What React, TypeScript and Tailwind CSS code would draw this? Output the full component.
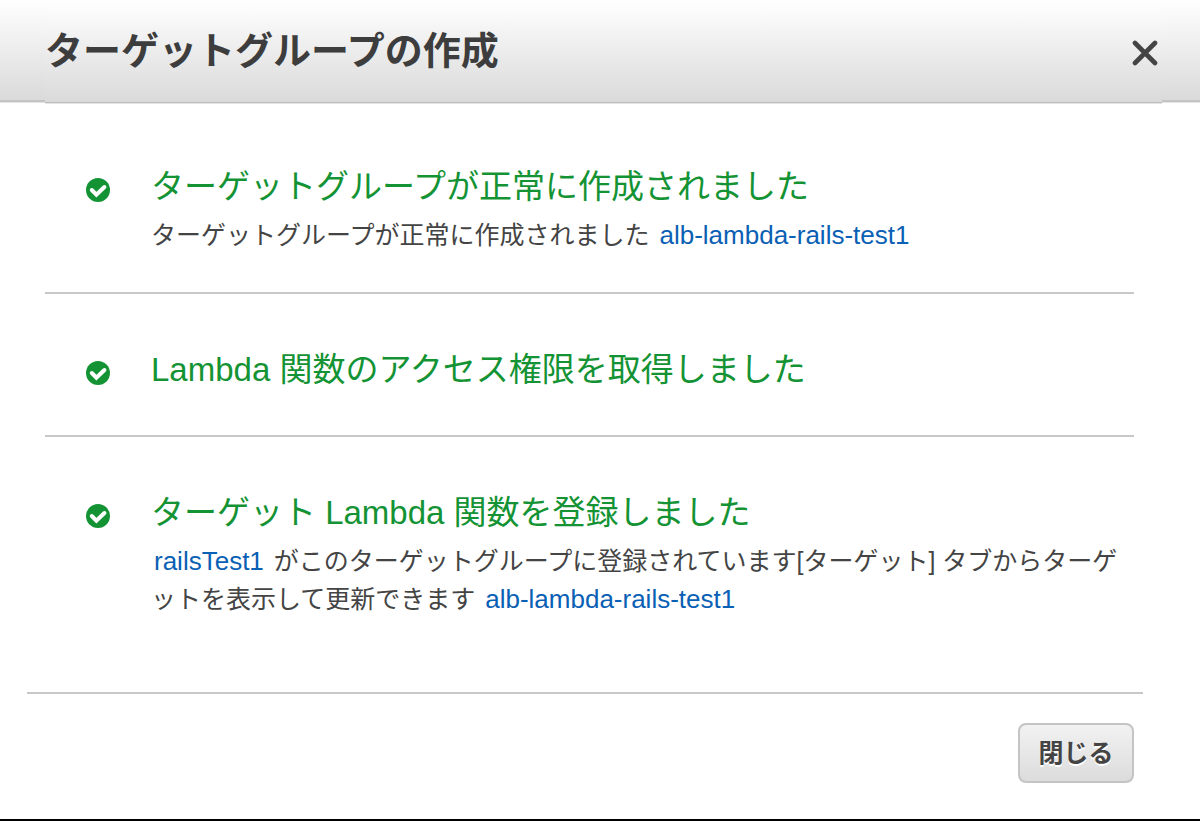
import type { ReactNode } from "react";

type Step = {
  title: string;
  detail?: ReactNode;
};

function TextLink({ children }: { children: ReactNode }) {
  return (
    <a href="#" className="mx-[3px] text-[26px] text-[#0a60b4] hover:underline">
      {children}
    </a>
  );
}

const steps: Step[] = [
  {
    title: "ターゲットグループが正常に作成されました",
    detail: (
      <>
        ターゲットグループが正常に作成されました{" "}
        <TextLink>alb-lambda-rails-test1</TextLink>
      </>
    ),
  },
  { title: "Lambda 関数のアクセス権限を取得しました" },
  {
    title: "ターゲット Lambda 関数を登録しました",
    detail: (
      <>
        <TextLink>railsTest1</TextLink>{" "}
        がこのターゲットグループに登録されています[ターゲット] タブからターゲットを表示して更新できます{" "}
        <TextLink>alb-lambda-rails-test1</TextLink>
      </>
    ),
  },
];

function CheckIcon() {
  return (
    <svg viewBox="0 0 24 24" className="h-6 w-6" aria-hidden="true">
      <circle cx="12" cy="12" r="12" fill="#149334" />
      <path
        d="M5.8 12 10.4 16.6 18.4 9"
        fill="none"
        stroke="#fff"
        strokeWidth="4"
        strokeLinecap="round"
      />
    </svg>
  );
}

export default function App() {
  return (
    <div
      role="dialog"
      aria-labelledby="dialog-title"
      lang="ja"
      className="border-b-2 border-black bg-white font-['Liberation_Sans','Noto_Sans_CJK_JP',sans-serif] text-[#444]"
    >
      <header className="flex items-start">
        <div className="h-[102px] w-[45px] border-b-2 border-[#c4c4c4] bg-linear-to-b from-white to-[#dadada] shadow-[0_1px_0_#e4e4e4]" />
        <div className="flex h-[103px] flex-1 items-center justify-between border-b border-[#bdbdbd] bg-linear-to-b from-white to-[#dadada] shadow-[0_1px_0_#e4e4e4]">
          <h1 id="dialog-title" className="text-[38px] leading-[56px] font-bold text-[#3d3d3d]">
            ターゲットグループの作成
          </h1>
          <button type="button" aria-label="閉じる" className="mt-1 mr-1 p-0">
            <svg viewBox="0 0 26 26" className="h-[26px] w-[26px]" aria-hidden="true">
              <path d="M3 3 23 23M23 3 3 23" stroke="#444" strokeWidth="4.6" strokeLinecap="round" />
            </svg>
          </button>
        </div>
        <div className="h-[102px] w-[38px] border-b-2 border-[#c4c4c4] bg-linear-to-b from-white to-[#dadada] shadow-[0_1px_0_#e4e4e4]" />
      </header>

      <ul className="mr-[66px] ml-[45px] pt-2">
        {steps.map((step) => (
          <li
            key={step.title}
            className="flex min-h-[143px] border-b-2 border-[#c8c8c8] pt-14 pb-[38px] last:border-b-0"
          >
            <div className="w-[106px] shrink-0 pt-[11px] pl-[41px]">
              <CheckIcon />
            </div>
            <div className="flex-1">
              <h2 className="text-[33px] leading-[40px] text-[#149334]">{step.title}</h2>
              {step.detail && <p className="mt-[9px] text-[25px] leading-[38px]">{step.detail}</p>}
            </div>
          </li>
        ))}
      </ul>

      <footer className="mt-9 mr-[57px] ml-[27px] flex justify-end border-t-2 border-[#c8c8c8] pt-[29px] pr-[9px] pb-9">
        <button
          type="button"
          className="h-[60px] w-[116px] rounded-lg border-2 border-[#c4c4c4] bg-linear-to-b from-[#f2f2f2] to-[#dcdcdc] text-[25px] leading-[38px] font-bold text-[#444] [text-shadow:0_2px_0_#fff]"
        >
          閉じる
        </button>
      </footer>
    </div>
  );
}
